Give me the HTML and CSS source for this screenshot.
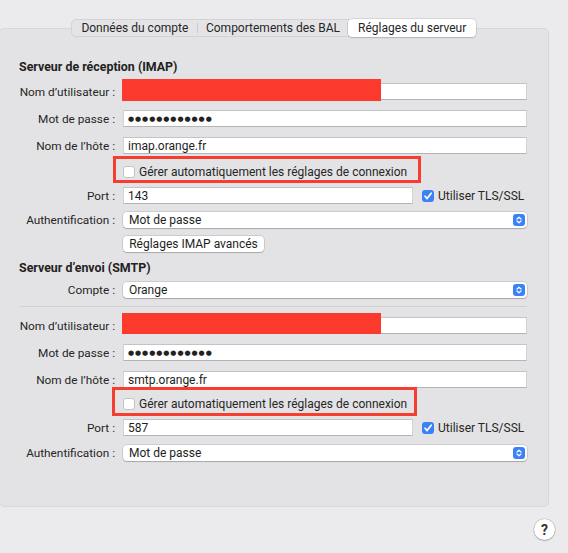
FILE: index.html
```html
<!DOCTYPE html>
<html lang="fr">
<head>
<meta charset="utf-8">
<title>Réglages du serveur</title>
<link rel="stylesheet" href="styles.css">
</head>
<body>
<div class="window">
  <div class="tabbar">
    <div class="segmented">
      <div class="seg seg-1">Données du compte</div>
      <div class="seg seg-2">Comportements des BAL</div>
      <div class="seg seg-3 is-selected">Réglages du serveur</div>
    </div>
  </div>

  <div class="panel">
    <h2 class="section-title title-imap">Serveur de réception (IMAP)</h2>

    <div class="row r-user">
      <span class="label">Nom d’utilisateur :</span>
      <div class="field field-user"><span class="redact"></span></div>
    </div>
    <div class="row r-pass">
      <span class="label">Mot de passe :</span>
      <div class="field"><span class="dots">●●●●●●●●●●●●</span></div>
    </div>
    <div class="row r-host">
      <span class="label">Nom de l’hôte :</span>
      <div class="field">imap.orange.fr</div>
    </div>
    <div class="row r-check">
      <span class="label"></span>
      <div class="check-cell">
        <span class="annot annot-1"></span>
        <span class="checkbox"></span>
        <span class="check-text">Gérer automatiquement les réglages de connexion</span>
      </div>
    </div>
    <div class="row r-port">
      <span class="label">Port :</span>
      <div class="port-cell">
        <div class="field field-port">143</div>
        <span class="checkbox is-checked"><svg viewBox="0 0 12 12" width="12" height="12"><path d="M3 6.2 L5.1 8.6 L9.2 3.2" fill="none" stroke="#fff" stroke-width="1.7" stroke-linecap="round" stroke-linejoin="round"/></svg></span>
        <span class="check-text">Utiliser TLS/SSL</span>
      </div>
    </div>
    <div class="row r-auth">
      <span class="label">Authentification :</span>
      <div class="popup">Mot de passe<span class="stepper"><svg viewBox="0 0 12 12" width="12" height="12"><path d="M4 5 L6 3.2 L8 5 M4 7 L6 8.8 L8 7" fill="none" stroke="#fff" stroke-width="1.2" stroke-linecap="round" stroke-linejoin="round"/></svg></span></div>
    </div>
    <div class="row r-adv">
      <span class="label"></span>
      <div><button class="button">Réglages IMAP avancés</button></div>
    </div>

    <h2 class="section-title title-smtp">Serveur d’envoi (SMTP)</h2>

    <div class="row r-compte">
      <span class="label">Compte :</span>
      <div class="popup">Orange<span class="stepper"><svg viewBox="0 0 12 12" width="12" height="12"><path d="M4 5 L6 3.2 L8 5 M4 7 L6 8.8 L8 7" fill="none" stroke="#fff" stroke-width="1.2" stroke-linecap="round" stroke-linejoin="round"/></svg></span></div>
    </div>

    <div class="separator"></div>

    <div class="row r-user2">
      <span class="label">Nom d’utilisateur :</span>
      <div class="field field-user"><span class="redact redact-2"></span></div>
    </div>
    <div class="row r-pass2">
      <span class="label">Mot de passe :</span>
      <div class="field"><span class="dots">●●●●●●●●●●●●</span></div>
    </div>
    <div class="row r-host2">
      <span class="label">Nom de l’hôte :</span>
      <div class="field">smtp.orange.fr</div>
    </div>
    <div class="row r-check2">
      <span class="label"></span>
      <div class="check-cell">
        <span class="annot annot-2"></span>
        <span class="checkbox"></span>
        <span class="check-text">Gérer automatiquement les réglages de connexion</span>
      </div>
    </div>
    <div class="row r-port2">
      <span class="label">Port :</span>
      <div class="port-cell">
        <div class="field field-port">587</div>
        <span class="checkbox is-checked"><svg viewBox="0 0 12 12" width="12" height="12"><path d="M3 6.2 L5.1 8.6 L9.2 3.2" fill="none" stroke="#fff" stroke-width="1.7" stroke-linecap="round" stroke-linejoin="round"/></svg></span>
        <span class="check-text">Utiliser TLS/SSL</span>
      </div>
    </div>
    <div class="row r-auth2">
      <span class="label">Authentification :</span>
      <div class="popup">Mot de passe<span class="stepper"><svg viewBox="0 0 12 12" width="12" height="12"><path d="M4 5 L6 3.2 L8 5 M4 7 L6 8.8 L8 7" fill="none" stroke="#fff" stroke-width="1.2" stroke-linecap="round" stroke-linejoin="round"/></svg></span></div>
    </div>
  </div>

  <div class="footer">
    <button class="help">?</button>
  </div>
</div>
</body>
</html>
```

FILE: styles.css
```css
* { box-sizing: border-box; }

html, body {
  margin: 0;
  padding: 0;
}

body {
  background: #ebebed;
  font-family: Roboto, "Liberation Sans", sans-serif;
  font-size: 12px;
  color: #262626;
  width: 568px;
  height: 553px;
  overflow: hidden;
}

.window {
  width: 568px;
  height: 553px;
}

/* ---------- tabs ---------- */
.tabbar {
  padding-top: 19px;
  padding-left: 71px;
  position: relative;
  z-index: 2;
  height: 37px;
}

.segmented {
  display: flex;
  width: 405px;
  height: 18px;
  background: #e4e4e6;
  border: 1px solid #d3d3d5;
  border-radius: 5px;
}

.seg {
  display: flex;
  align-items: center;
  justify-content: center;
  height: 16px;
  color: #262626;
  position: relative;
  white-space: nowrap;
}

.seg-1 { width: 126px; }
.seg-2 { width: 151px; }
.seg-3 { width: 126px; }

.seg-1::after {
  content: "";
  position: absolute;
  right: 0;
  top: 3px;
  width: 1px;
  height: 10px;
  background: #cacacc;
}

.seg.is-selected {
  background: #ffffff;
  border-radius: 4px;
  height: 18px;
  margin-top: -1px;
  margin-right: -1px;
  width: 128px;
  box-shadow: 0 0 0 0.5px rgba(0,0,0,0.18), 0 1px 1.5px rgba(0,0,0,0.12);
}

/* ---------- panel ---------- */
.panel {
  margin-top: -9px;
  margin-left: -1px;
  width: 550px;
  height: 479px;
  background: #e3e3e5;
  border: 1px solid #d8d8da;
  border-radius: 5px;
  padding: 30px 0 0 19px;
  position: relative;
  z-index: 1;
}

.section-title {
  margin: 0;
  font-size: 12.4px;
  font-weight: 700;
  line-height: 16px;
  height: 16px;
  color: #222;
}

.title-smtp { margin-top: 8px; }

.row {
  display: grid;
  grid-template-columns: 96px 404px;
  column-gap: 8px;
  align-items: center;
  height: 17px;
}

.label {
  text-align: right;
  white-space: nowrap;
  color: #262626;
  font-size: 11.8px;
}

.r-user  { margin-top: 8px; }
.r-pass  { margin-top: 10px; }
.r-host  { margin-top: 10px; }
.r-check { margin-top: 9px; }
.r-port  { margin-top: 7px; }
.r-auth  { margin-top: 8px; height: 16px; }
.r-adv   { margin-top: 8px; height: 16px; }
.r-compte { margin-top: 6px; height: 16px; }
.r-user2 { margin-top: 10px; }
.r-pass2 { margin-top: 10px; }
.r-host2 { margin-top: 10px; }
.r-check2 { margin-top: 7px; }
.r-port2 { margin-top: 7px; }
.r-auth2 { margin-top: 9px; height: 16px; }

.separator {
  margin-top: 8px;
  width: 507px;
  margin-left: 1px;
  height: 1px;
  background: #d0d0d2;
}

/* ---------- fields ---------- */
.field {
  position: relative;
  height: 17px;
  background: #ffffff;
  border: 1px solid #d2d2d4;
  border-top-color: #c4c4c6;
  border-bottom-color: #b4b4b6;
  padding-left: 4px;
  display: flex;
  align-items: center;
  color: #1e1e1e;
  white-space: nowrap;
}

.field-user { padding-left: 0; }

.field-port { width: 290px; flex: none; }

.dots {
  font-family: "DejaVu Sans", sans-serif;
  font-size: 7px;
  letter-spacing: 0.95px;
  color: #222;
}

.redact {
  position: absolute;
  left: -2px;
  top: -5px;
  width: 259px;
  height: 22px;
  background: #fb3a2d;
}

.redact-2 {
  height: 21px;
}

/* ---------- checkboxes ---------- */
.check-cell {
  position: relative;
  display: flex;
  align-items: center;
  height: 17px;
}

.port-cell {
  display: flex;
  align-items: center;
  height: 17px;
}

.checkbox {
  width: 12px;
  height: 12px;
  flex: none;
  background: #ffffff;
  border-radius: 3px;
  box-shadow: inset 0 0 0 1px #c3c3c5;
  display: inline-flex;
  position: relative;
  z-index: 1;
}

.checkbox.is-checked {
  background: #3b82f6;
  box-shadow: none;
}

.check-cell .checkbox { margin-right: 4px; }
.port-cell .checkbox { margin-left: 9px; margin-right: 4px; }

.check-text {
  white-space: nowrap;
  color: #262626;
  position: relative;
  z-index: 1;
}

.annot {
  position: absolute;
  border: 3.5px solid #f53d30;
}

.annot-1 {
  left: -10px;
  top: -7px;
  width: 308px;
  height: 27px;
}

.annot-2 {
  left: -11px;
  top: -8px;
  width: 305px;
  height: 29px;
}

/* ---------- popups & buttons ---------- */
.popup {
  position: relative;
  height: 16px;
  background: #ffffff;
  border-radius: 4px;
  box-shadow: 0 0 0 0.5px rgba(0,0,0,0.2), 0 1px 1px rgba(0,0,0,0.18);
  padding-left: 6px;
  display: flex;
  align-items: center;
  color: #1e1e1e;
}

.stepper {
  position: absolute;
  right: 2px;
  top: 2px;
  width: 12px;
  height: 12px;
  border-radius: 3px;
  background: #3b82f6;
  display: flex;
}

.button {
  font: inherit;
  color: #1e1e1e;
  background: #ffffff;
  border: none;
  border-radius: 4px;
  box-shadow: 0 0 0 0.5px rgba(0,0,0,0.2), 0 1px 1px rgba(0,0,0,0.18);
  height: 16px;
  width: 141px;
  padding: 0;
  display: flex;
  align-items: center;
  justify-content: center;
}

/* ---------- footer ---------- */
.footer {
  display: flex;
  justify-content: flex-end;
  padding-right: 13px;
  margin-top: 12px;
}

.help {
  width: 21px;
  height: 21px;
  border-radius: 50%;
  border: none;
  background: #ffffff;
  box-shadow: 0 0 0 0.5px rgba(0,0,0,0.2), 0 1px 1.5px rgba(0,0,0,0.2);
  font-family: Roboto, "Liberation Sans", sans-serif;
  font-size: 14px;
  font-weight: 700;
  color: #333;
  padding: 0;
  display: flex;
  align-items: center;
  justify-content: center;
}
```
